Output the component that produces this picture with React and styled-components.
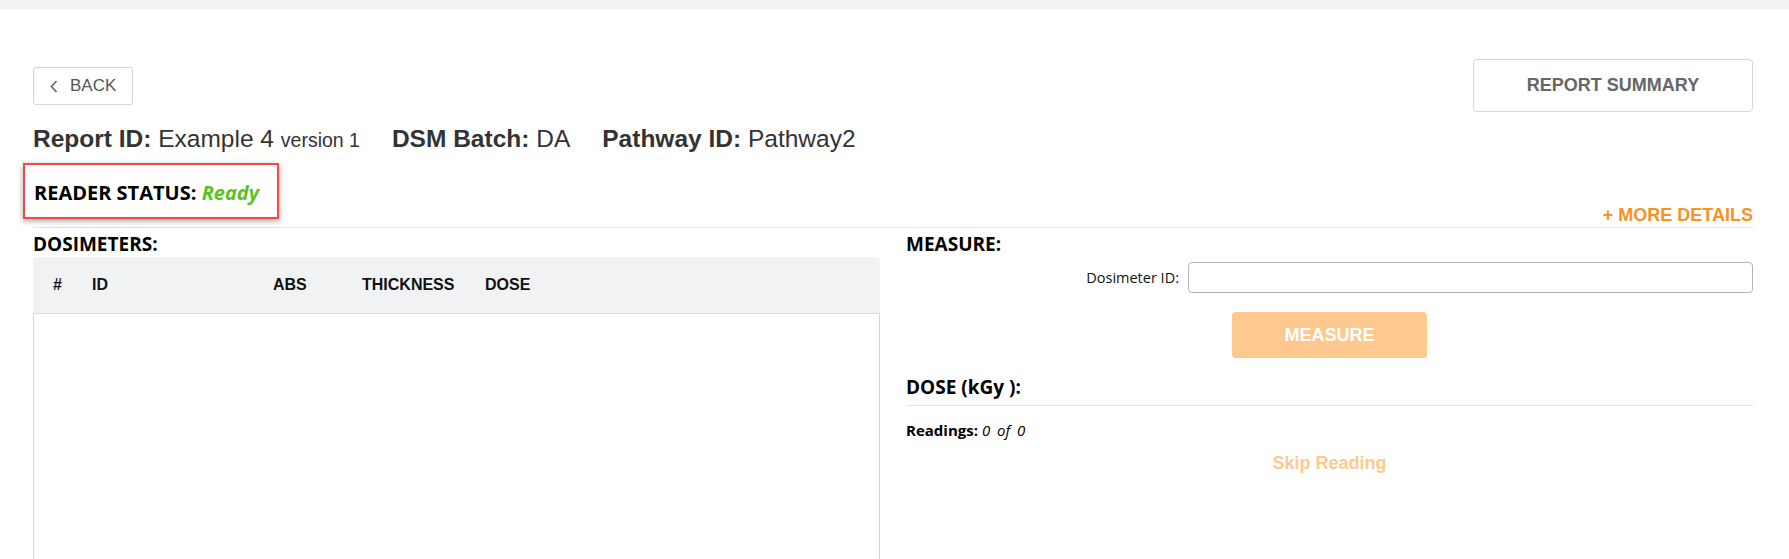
import React from 'react'
import styled, { createGlobalStyle } from 'styled-components'

const GlobalStyle = createGlobalStyle`
  html, body {
    margin: 0;
    padding: 0;
    overflow: hidden;
    background: #fff;
  }
  * {
    box-sizing: border-box;
  }
`

const arial = `'Liberation Sans', Arial, sans-serif`
const segoe = `'Open Sans', 'Noto Sans', sans-serif`

const TopBar = styled.div`
  height: 9px;
  background: #f1f2f4;
`

const Content = styled.div`
  padding: 0 36px 0 33px;
`

const HeaderRow = styled.div`
  margin-top: 50px;
  display: flex;
  justify-content: space-between;
  align-items: flex-start;
`

const BackButton = styled.button`
  margin-top: 8px;
  height: 38px;
  width: 100px;
  display: flex;
  align-items: center;
  gap: 12px;
  padding: 0 0 0 16px;
  background: #fff;
  border: 1px solid #d4d4d4;
  border-radius: 3px;
  font-family: ${arial};
  font-size: 17px;
  color: #555;
  cursor: pointer;
`

const SummaryButton = styled.button`
  width: 280px;
  height: 53px;
  background: #fff;
  border: 1px solid #d6d6d6;
  border-radius: 4px;
  font-family: ${arial};
  font-weight: bold;
  font-size: 18px;
  color: #666;
  cursor: pointer;
`

const InfoLine = styled.div`
  margin-top: 13px;
  display: flex;
  gap: 32px;
  font-family: ${arial};
  font-size: 24.5px;
  line-height: 28px;
  color: #333;
  white-space: nowrap;
`

const InfoItem = styled.span`
  b {
    font-weight: bold;
  }
  small {
    font-size: 19.5px;
  }
`

const StatusRow = styled.div`
  margin-top: 9px;
  display: flex;
  justify-content: space-between;
  align-items: flex-end;
  border-bottom: 1px solid #e2e2e2;
`

const StatusBox = styled.div`
  width: 256px;
  margin: 0 0 8px -10px;
  padding: 14px 0 11px 9px;
  border: 2px solid #f24a4a;
  box-shadow: 0 2px 6px rgba(0, 0, 0, 0.35);
  font-family: ${segoe};
  font-weight: 700;
  font-size: 20px;
  line-height: 27px;
  color: #000;
  white-space: nowrap;
`

const Ready = styled.span`
  font-style: italic;
  color: #57c51c;
`

const MoreDetails = styled.a`
  padding-bottom: 2px;
  font-family: ${arial};
  font-weight: bold;
  font-size: 18px;
  line-height: 20px;
  color: #f7931e;
  text-decoration: none;
  cursor: pointer;
`

const Columns = styled.div`
  display: grid;
  grid-template-columns: 1fr 1fr;
  gap: 26px;
`

const Column = styled.div`
  display: flex;
  flex-direction: column;
`

const SectionTitle = styled.div`
  margin-top: ${(p) => p.$top || 3}px;
  font-family: ${segoe};
  font-weight: 700;
  font-size: 19px;
  line-height: 26px;
  color: #000;
  ${(p) => p.$rule && 'padding-bottom: 5px; border-bottom: 1px solid #e2e2e2;'}
`

const Table = styled.div`
  display: flex;
  flex-direction: column;
`

const HeadRow = styled.div`
  display: grid;
  grid-template-columns: 39px 181px 89px 123px 1fr;
  align-items: center;
  height: 57px;
  background: #f1f2f4;
  border-bottom: 1px solid #dcdddf;
  border-radius: 4px 4px 0 0;
`

const HeadCell = styled.div`
  padding-left: 20px;
  font-family: ${arial};
  font-weight: bold;
  font-size: 16px;
  color: #111;
`

const TableBody = styled.div`
  height: 300px;
  border-left: 1px solid #d3d5d8;
  border-right: 1px solid #d3d5d8;
`

const FieldRow = styled.div`
  margin-top: 5px;
  display: grid;
  grid-template-columns: 1fr 565px;
  gap: 9px;
  align-items: center;
`

const FieldLabel = styled.label`
  text-align: right;
  font-family: ${segoe};
  font-size: 14.5px;
  color: #111;
`

const FieldInput = styled.input`
  height: 31px;
  border: 1px solid #b5b5b5;
  border-radius: 4px;
  padding: 0 8px;
  outline: none;
`

const MeasureButton = styled.button`
  align-self: center;
  margin-top: 19px;
  width: 195px;
  height: 46px;
  border: none;
  border-radius: 4px;
  background: #fdc98e;
  color: #fff;
  font-family: ${arial};
  font-weight: bold;
  font-size: 18px;
`

const Readings = styled.div`
  margin-top: 14px;
  font-family: ${segoe};
  font-size: 15px;
  line-height: 20px;
  color: #000;
  b {
    font-weight: 700;
  }
  i {
    word-spacing: 3px;
  }
`

const SkipLink = styled.a`
  align-self: center;
  margin-top: 13px;
  font-family: ${arial};
  font-weight: bold;
  font-size: 18px;
  line-height: 20px;
  color: #fdc98e;
  cursor: pointer;
`

const columns = ['#', 'ID', 'ABS', 'THICKNESS', 'DOSE']

export default function App() {
  return (
    <>
      <GlobalStyle />
      <TopBar />
      <Content>
        <HeaderRow>
          <BackButton>
            <svg width="8" height="13" viewBox="0 0 8 13">
              <polyline points="6.5,1 1.5,6.5 6.5,12" fill="none" stroke="#666" strokeWidth="1.7" />
            </svg>
            BACK
          </BackButton>
          <SummaryButton>REPORT SUMMARY</SummaryButton>
        </HeaderRow>

        <InfoLine>
          <InfoItem>
            <b>Report ID:</b> Example 4 <small>version 1</small>
          </InfoItem>
          <InfoItem>
            <b>DSM Batch:</b> DA
          </InfoItem>
          <InfoItem>
            <b>Pathway ID:</b> Pathway2
          </InfoItem>
        </InfoLine>

        <StatusRow>
          <StatusBox>
            READER STATUS: <Ready>Ready</Ready>
          </StatusBox>
          <MoreDetails>+ MORE DETAILS</MoreDetails>
        </StatusRow>

        <Columns>
          <Column>
            <SectionTitle>DOSIMETERS:</SectionTitle>
            <Table>
              <HeadRow>
                {columns.map((c) => (
                  <HeadCell key={c}>{c}</HeadCell>
                ))}
              </HeadRow>
              <TableBody />
            </Table>
          </Column>

          <Column>
            <SectionTitle>MEASURE:</SectionTitle>
            <FieldRow>
              <FieldLabel>Dosimeter ID:</FieldLabel>
              <FieldInput type="text" />
            </FieldRow>
            <MeasureButton disabled>MEASURE</MeasureButton>
            <SectionTitle $top={16} $rule>
              DOSE (kGy ):
            </SectionTitle>
            <Readings>
              <b>Readings:</b> <i>0 of 0</i>
            </Readings>
            <SkipLink>Skip Reading</SkipLink>
          </Column>
        </Columns>
      </Content>
    </>
  )
}
